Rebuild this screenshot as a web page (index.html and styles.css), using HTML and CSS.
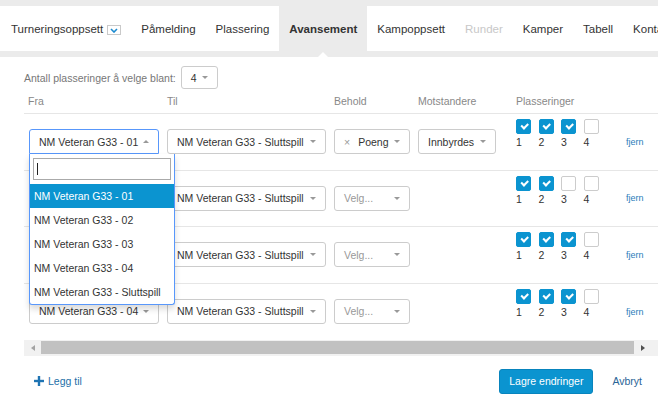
FILE: index.html
```html
<!DOCTYPE html>
<html lang="no">
<head>
    <meta charset="UTF-8">
    <meta name="viewport" content="width=device-width, initial-scale=1.0">
    <title>Avansement</title>
    <link rel="stylesheet" href="styles.css">
</head>
<body>
    <nav class="tabs">
        <ul>
            <li>Turneringsoppsett
                <span class="menu-toggle">
                    <svg width="8" height="5" viewBox="0 0 8 5"><path d="M1 1 L4 4 L7 1" fill="none" stroke="#1a8ad0" stroke-width="1.6"/></svg>
                </span>
            </li>
            <li>Påmelding</li>
            <li>Plassering</li>
            <li class="active">Avansement</li>
            <li>Kampoppsett</li>
            <li class="disabled">Runder</li>
            <li>Kamper</li>
            <li>Tabell</li>
            <li>Kontakter</li>
        </ul>
    </nav>

    <div class="panel">
        <div class="count">
            <span>Antall plasseringer å velge blant:</span>
            <div class="select count-select"><span>4</span></div>
        </div>

        <div class="grid">
            <div class="head">
                <div class="c-fra">Fra</div>
                <div class="c-til">Til</div>
                <div class="c-beh">Behold</div>
                <div class="c-mot">Motstandere</div>
                <div class="c-pla">Plasseringer</div>
            </div>

            <div class="row">
                <div class="c-fra">
                    <div class="select open w-fra"><span>NM Veteran G33 - 01</span></div>
                    <div class="dropdown">
                        <div class="search"><span class="cursor"></span></div>
                        <div class="opt hl">NM Veteran G33 - 01</div>
                        <div class="opt">NM Veteran G33 - 02</div>
                        <div class="opt">NM Veteran G33 - 03</div>
                        <div class="opt">NM Veteran G33 - 04</div>
                        <div class="opt">NM Veteran G33 - Sluttspill</div>
                    </div>
                </div>
                <div class="c-til"><div class="select w-til"><span>NM Veteran G33 - Sluttspill</span></div></div>
                <div class="c-beh"><div class="select w-beh"><span><span class="clear">×</span>Poeng</span></div></div>
                <div class="c-mot"><div class="select w-mot"><span>Innbyrdes</span></div></div>
                <div class="c-pla">
                    <div class="places">
                        <div class="place"><span class="cb on"></span><span>1</span></div>
                        <div class="place"><span class="cb on"></span><span>2</span></div>
                        <div class="place"><span class="cb on"></span><span>3</span></div>
                        <div class="place"><span class="cb"></span><span>4</span></div>
                    </div>
                </div>
                <a class="remove">fjern</a>
            </div>

            <div class="row">
                <div class="c-fra"><div class="select w-fra"><span>NM Veteran G33 - 02</span></div></div>
                <div class="c-til"><div class="select w-til"><span>NM Veteran G33 - Sluttspill</span></div></div>
                <div class="c-beh"><div class="select w-beh placeholder"><span>Velg...</span></div></div>
                <div class="c-mot"></div>
                <div class="c-pla">
                    <div class="places">
                        <div class="place"><span class="cb on"></span><span>1</span></div>
                        <div class="place"><span class="cb on"></span><span>2</span></div>
                        <div class="place"><span class="cb"></span><span>3</span></div>
                        <div class="place"><span class="cb"></span><span>4</span></div>
                    </div>
                </div>
                <a class="remove">fjern</a>
            </div>

            <div class="row">
                <div class="c-fra"><div class="select w-fra"><span>NM Veteran G33 - 03</span></div></div>
                <div class="c-til"><div class="select w-til"><span>NM Veteran G33 - Sluttspill</span></div></div>
                <div class="c-beh"><div class="select w-beh placeholder"><span>Velg...</span></div></div>
                <div class="c-mot"></div>
                <div class="c-pla">
                    <div class="places">
                        <div class="place"><span class="cb on"></span><span>1</span></div>
                        <div class="place"><span class="cb on"></span><span>2</span></div>
                        <div class="place"><span class="cb on"></span><span>3</span></div>
                        <div class="place"><span class="cb"></span><span>4</span></div>
                    </div>
                </div>
                <a class="remove">fjern</a>
            </div>

            <div class="row">
                <div class="c-fra"><div class="select w-fra"><span>NM Veteran G33 - 04</span></div></div>
                <div class="c-til"><div class="select w-til"><span>NM Veteran G33 - Sluttspill</span></div></div>
                <div class="c-beh"><div class="select w-beh placeholder"><span>Velg...</span></div></div>
                <div class="c-mot"></div>
                <div class="c-pla">
                    <div class="places">
                        <div class="place"><span class="cb on"></span><span>1</span></div>
                        <div class="place"><span class="cb on"></span><span>2</span></div>
                        <div class="place"><span class="cb on"></span><span>3</span></div>
                        <div class="place"><span class="cb"></span><span>4</span></div>
                    </div>
                </div>
                <a class="remove">fjern</a>
            </div>
        </div>

        <div class="hscroll">
            <span class="arrow left"></span>
            <span class="thumb"></span>
            <span class="arrow right"></span>
        </div>

        <div class="foot">
            <a class="add">
                <svg width="10" height="10" viewBox="0 0 10 10"><rect x="3.8" y="0" width="2.4" height="10" fill="#1f74b3"/><rect x="0" y="3.8" width="10" height="2.4" fill="#1f74b3"/></svg>
                Legg til
            </a>
            <div class="actions">
                <button class="btn-primary">Lagre endringer</button>
                <a class="cancel">Avbryt</a>
            </div>
        </div>
    </div>
</body>
</html>
```

FILE: styles.css
```css
html, body {
    overflow: hidden;
}
body {
    margin: 0;
    width: 658px;
    height: 395px;
    font-family: "Liberation Sans", Arial, sans-serif;
    font-size: 10.5px;
    color: #333;
    background: #fff;
}

/* tabs */
.tabs {
    border-top: 6px solid #ebebeb;
    border-bottom: 6px solid #ebebeb;
    background: #fff;
}
.tabs ul {
    list-style: none;
    margin: 0;
    padding: 0 0 0 1px;
    display: flex;
    height: 45px;
    white-space: nowrap;
}
.tabs li {
    position: relative;
    display: flex;
    align-items: center;
    padding: 0 10px;
    font-size: 11.5px;
    color: #333;
}
.tabs li.active {
    background: #ebebeb;
    font-weight: bold;
}
.tabs li.active::after {
    content: "";
    position: absolute;
    left: 50%;
    bottom: -6px;
    margin-left: -5px;
    border-style: solid;
    border-width: 0 5px 5px;
    border-color: transparent transparent #fff;
}
.tabs li.disabled {
    color: #c8c8c8;
}
.menu-toggle {
    display: inline-flex;
    align-items: center;
    justify-content: center;
    box-sizing: border-box;
    width: 14px;
    height: 10px;
    margin-left: 4px;
    margin-top: 3px;
    border: 1px solid #c9c9c9;
}

/* panel */
.panel {
    width: 634px;
    padding: 9px 0 0 24px;
}
.count {
    display: flex;
    align-items: center;
    gap: 5px;
    height: 23px;
    color: #777;
}
.select {
    box-sizing: border-box;
    display: flex;
    align-items: center;
    justify-content: space-between;
    height: 25px;
    padding: 0 9px;
    border: 1px solid #ccc;
    border-radius: 3px;
    background: #fff;
    color: #333;
    white-space: nowrap;
}
.select::after {
    content: "";
    border-style: solid;
    border-width: 3px 3px 0;
    border-color: #999 transparent transparent;
}
.select.open {
    border-color: #5897fb;
    border-bottom-left-radius: 0;
    border-bottom-right-radius: 0;
}
.select.open::after {
    border-width: 0 3px 3px;
    border-color: transparent transparent #999;
}
.select.placeholder {
    color: #999;
}
.count-select {
    width: 37px;
    height: 23px;
}
.clear {
    color: #999;
    margin-right: 8px;
}
.w-fra { width: 130px; }
.w-til { width: 159px; }
.w-beh { width: 76px; }
.w-mot { width: 78px; }

/* grid */
.head, .row {
    display: flex;
    padding-left: 5px;
}
.head {
    padding-top: 6px;
    padding-bottom: 5px;
    line-height: 13px;
    color: #888;
    border-bottom: 1px solid #e6e6e6;
}
.head .c-fra { margin-left: -1px; width: 139px; }
.c-fra { width: 138px; position: relative; }
.c-til { width: 167px; }
.c-beh { width: 84px; }
.c-mot { width: 98px; }
.c-pla { width: 110px; }
.row {
    height: 55.67px;
    border-bottom: 1px solid #e6e6e6;
}
.row:last-child {
    border-bottom: 0;
}
.row > div {
    padding-top: 15px;
}
.row > .c-pla {
    padding-top: 5px;
}
.places {
    display: flex;
    gap: 7.5px;
}
.place {
    display: flex;
    flex-direction: column;
    width: 15px;
    line-height: 12px;
}
.cb {
    box-sizing: border-box;
    position: relative;
    width: 15px;
    height: 15px;
    margin-bottom: 2px;
    border: 1px solid #ccc;
    border-radius: 2px;
    background: #fff;
}
.cb.on {
    background: #0b94d0;
    border-color: #0b94d0;
}
.cb.on::after {
    content: "";
    position: absolute;
    left: 3.5px;
    top: 3px;
    width: 5px;
    height: 2.5px;
    border-left: 2px solid #fff;
    border-bottom: 2px solid #fff;
    transform: rotate(-45deg);
}
.remove {
    align-self: center;
    font-size: 9px;
    color: #2a7dbb;
}

/* open select list */
.dropdown {
    position: absolute;
    top: 40px;
    left: 0;
    z-index: 2;
    box-sizing: border-box;
    width: 146px;
    padding-top: 4px;
    border: 1px solid #5897fb;
    border-top: 0;
    border-radius: 0 0 3px 3px;
    background: #fff;
    box-shadow: 0 4px 6px rgba(0, 0, 0, 0.15);
}
.search {
    box-sizing: border-box;
    display: flex;
    align-items: center;
    height: 22px;
    margin: 0 3px 4px;
    padding-left: 3px;
    border: 1px solid #aaa;
}
.cursor {
    width: 1px;
    height: 12px;
    background: #222;
}
.opt {
    height: 24px;
    line-height: 24px;
    padding-left: 4px;
    white-space: nowrap;
}
.opt.hl {
    background: #0b94d0;
    color: #fff;
}

/* fake horizontal scrollbar */
.hscroll {
    display: flex;
    align-items: center;
    width: 641px;
    height: 16px;
    background: #f1f1f1;
}
.arrow {
    display: flex;
    justify-content: center;
    width: 17px;
}
.arrow::before {
    content: "";
    border-style: solid;
}
.arrow.left::before {
    border-width: 3px 4px 3px 0;
    border-color: transparent #a3a3a3 transparent transparent;
}
.arrow.right::before {
    border-width: 3px 0 3px 4px;
    border-color: transparent transparent transparent #505050;
}
.thumb {
    width: 593px;
    height: 13px;
    background: #c1c1c1;
}

/* footer */
.foot {
    display: flex;
    justify-content: space-between;
    align-items: center;
    margin-top: 13px;
    padding: 0 16px 0 10px;
}
.add {
    display: flex;
    align-items: center;
    gap: 4px;
    color: #236fa8;
}
.actions {
    display: flex;
    align-items: center;
    gap: 19px;
}
.btn-primary {
    height: 25px;
    padding: 0 9px;
    border: 1px solid #0884bd;
    border-radius: 3px;
    background: #0b94d0;
    color: #fff;
    font-family: inherit;
    font-size: 10.5px;
}
.cancel {
    color: #2a6496;
}
```
